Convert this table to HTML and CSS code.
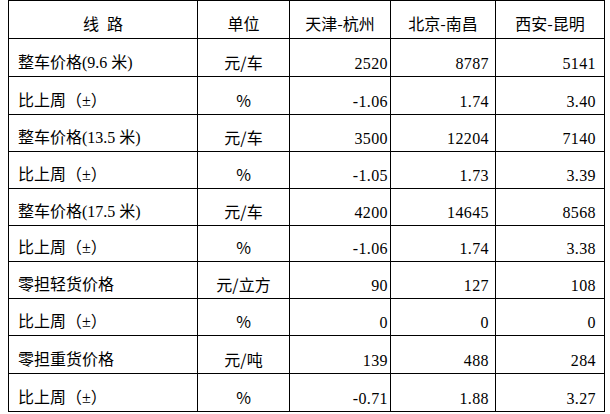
FILE: index.html
```html
<!DOCTYPE html>
<html lang="zh">
<head>
<meta charset="utf-8">
<title>线路价格</title>
<link rel="stylesheet" href="styles.css">
</head>
<body>
<table class="price-table">
  <colgroup>
    <col class="c-route">
    <col class="c-unit">
    <col class="c-a">
    <col class="c-b">
    <col class="c-c">
  </colgroup>
  <tr class="r-head">
    <th class="name-h">线&#8194;路</th>
    <th>单位</th>
    <th>天津-杭州</th>
    <th>北京-南昌</th>
    <th>西安-昆明</th>
  </tr>
  <tr class="r38">
    <td class="name">整车价格(9.6 米)</td><td class="unit">元/车</td>
    <td class="num a">2520</td><td class="num b">8787</td><td class="num c">5141</td>
  </tr>
  <tr class="r38">
    <td class="name">比上周（±）</td><td class="unit pct">%</td>
    <td class="num a">-1.06</td><td class="num b">1.74</td><td class="num c">3.40</td>
  </tr>
  <tr class="r37">
    <td class="name">整车价格(13.5 米)</td><td class="unit">元/车</td>
    <td class="num a">3500</td><td class="num b">12204</td><td class="num c">7140</td>
  </tr>
  <tr class="r37">
    <td class="name">比上周（±）</td><td class="unit pct">%</td>
    <td class="num a">-1.05</td><td class="num b">1.73</td><td class="num c">3.39</td>
  </tr>
  <tr class="r37">
    <td class="name">整车价格(17.5 米)</td><td class="unit">元/车</td>
    <td class="num a">4200</td><td class="num b">14645</td><td class="num c">8568</td>
  </tr>
  <tr class="r36">
    <td class="name">比上周（±）</td><td class="unit pct">%</td>
    <td class="num a">-1.06</td><td class="num b">1.74</td><td class="num c">3.38</td>
  </tr>
  <tr class="r37">
    <td class="name">零担轻货价格</td><td class="unit">元/立方</td>
    <td class="num a">90</td><td class="num b">127</td><td class="num c">108</td>
  </tr>
  <tr class="r37">
    <td class="name">比上周（±）</td><td class="unit pct">%</td>
    <td class="num a">0</td><td class="num b">0</td><td class="num c">0</td>
  </tr>
  <tr class="r38">
    <td class="name">零担重货价格</td><td class="unit">元/吨</td>
    <td class="num a">139</td><td class="num b">488</td><td class="num c">284</td>
  </tr>
  <tr class="r38">
    <td class="name">比上周（±）</td><td class="unit pct">%</td>
    <td class="num a">-0.71</td><td class="num b">1.88</td><td class="num c">3.27</td>
  </tr>
</table>
</body>
</html>
```

FILE: styles.css
```css
html, body {
  margin: 0;
  padding: 0;
  background: #ffffff;
}

body {
  padding-left: 8px;
  font-family: "Liberation Serif", "Noto Sans CJK SC", serif;
  font-size: 16px;
  color: #000000;
}

.price-table {
  border-collapse: collapse;
  table-layout: fixed;
  width: 597px;
}

.c-route { width: 189px; }
.c-unit { width: 92px; }
.c-a { width: 101px; }
.c-b { width: 105px; }
.c-c { width: 109px; }

.price-table th,
.price-table td {
  border: 1px solid #000000;
  padding: 0;
  vertical-align: bottom;
  line-height: 18px;
  font-weight: normal;
  white-space: nowrap;
}

.price-table th {
  text-align: center;
  font-family: "Noto Sans CJK SC", sans-serif;
  padding-bottom: 6px;
}

.r-head { height: 38px; }
.r38 { height: 38px; }
.r37 { height: 37px; }
.r36 { height: 36px; }

.price-table td.name {
  text-align: left;
  padding-left: 9px;
  padding-bottom: 4px;
}

.price-table td.unit {
  text-align: center;
  font-family: "Noto Sans CJK SC", sans-serif;
  padding-bottom: 5px;
}

.price-table td.num {
  text-align: right;
  letter-spacing: 0.4px;
  padding-bottom: 3px;
}

.price-table td.num.a { padding-right: 2px; }
.price-table td.num.b { padding-right: 6px; }
.price-table td.num.c { padding-right: 8px; }
```
